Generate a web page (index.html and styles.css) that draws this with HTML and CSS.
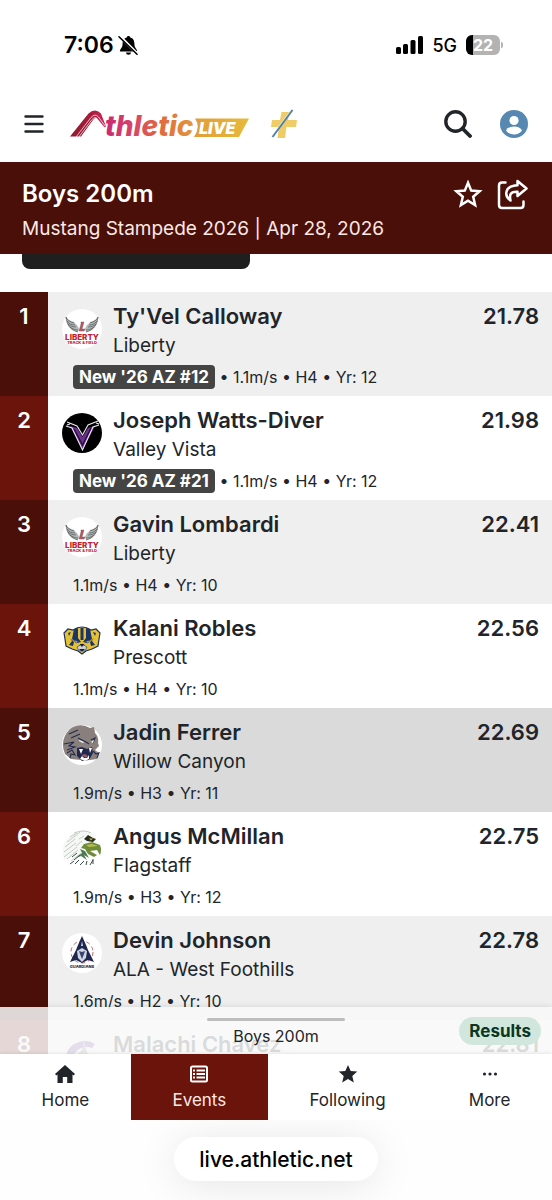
FILE: index.html
```html
<!DOCTYPE html>
<html lang="en">
<head>
<meta charset="utf-8">
<meta name="viewport" content="width=device-width, initial-scale=1">
<title>Boys 200m</title>
<link rel="stylesheet" href="styles.css">
</head>
<body>
<svg class="defs" aria-hidden="true">
  <symbol id="liberty" viewBox="0 0 40 40">
    <circle cx="20" cy="20" r="20" fill="#fff"/>
    <path d="M4 8c1 8 4 13 12 15l1-3c-1-4-4-5-5-7-3-1-6-2-8-5zM36 8c-1 8-4 13-12 15l-1-3c1-4 4-5 5-7 3-1 6-2 8-5z" fill="#b4b8b8"/>
    <path d="M4 8c1 3 4 5 8 6M5 12c2 3 5 4 8 4M6 15c2 2 5 3 8 3M8 18c3 2 5 3 8 3M36 8c-1 3-4 5-8 6M35 12c-2 3-5 4-8 4M34 15c-2 2-5 3-8 3M32 18c-3 2-5 3-8 3M4 8c1 8 4 13 12 15M36 8c-1 8-4 13-12 15" fill="none" stroke="#4c5252" stroke-width=".7"/>
    <path d="M19 13h3l-2 7h3l-1 2h-5l2-7z" fill="#c8505a" stroke="#555" stroke-width=".4"/>
    <text x="20" y="31" text-anchor="middle" class="crest-text" font-size="8" fill="#c3202b">LIBERTY</text>
    <text x="20" y="35" text-anchor="middle" class="crest-text" font-size="4" fill="#c3202b">TRACK &amp; FIELD</text>
  </symbol>
</svg>

<div class="status">
  <div class="status-side">
    <span class="clock">7:06</span>
    <svg width="21" height="21" viewBox="0 0 21 21" aria-hidden="true">
      <path d="M10.500 1a1.800 1.800 0 0 0-1.800 1.400C5.500 3.200 4.600 6 4.600 8.500c0 4-1.600 4.700-2.600 6.700-.3.800 0 1.300.8 1.300h15.400c.8 0 1.100-.5.800-1.300-1-2-2.600-2.700-2.600-6.700 0-2.500-.9-5.300-4.100-6.100A1.800 1.800 0 0 0 10.500 1zM8 17.500a2.500 2.300 0 0 0 5 0z"/>
      <path d="M1.500 1l18 18" stroke="#fff" stroke-width="3"/>
      <path d="M1 1.800l18 17.500" stroke="#000" stroke-width="1.600" stroke-linecap="round"/>
    </svg>
  </div>
  <div class="status-side status-right">
    <svg width="27" height="18" viewBox="0 0 27 18" aria-hidden="true">
      <rect x="0" y="11" width="5" height="7" rx="1.500"/><rect x="7" y="8" width="5" height="10" rx="1.500"/><rect x="14.500" y="4" width="5" height="14" rx="1.500"/><rect x="22" y="0" width="5" height="18" rx="1.500"/>
    </svg>
    <span class="network">5G</span>
    <span class="battery"><span class="battery-level">22</span></span>
  </div>
</div>

<header class="topbar">
  <button class="icon-button" aria-label="Menu">
    <svg width="20" height="20" viewBox="0 0 20 20"><path d="M1.500 2.500h17M1.500 10h17M1.500 17.500h17" stroke="#212529" stroke-width="2.400" stroke-linecap="round"/></svg>
  </button>
  <a class="brand" href="#" aria-label="Athletic Live">
    <svg width="180" height="30" viewBox="0 0 180 30">
      <defs>
        <linearGradient id="word" gradientUnits="userSpaceOnUse" x1="36" y1="0" x2="125" y2="0"><stop offset="0" stop-color="#c92a70"/><stop offset=".3" stop-color="#d8436a"/><stop offset=".6" stop-color="#e0683f"/><stop offset="1" stop-color="#e39a39"/></linearGradient>
        <linearGradient id="mark" x1="0" y1="0" x2="1" y2="0"><stop offset="0" stop-color="#8c1a2f"/><stop offset=".6" stop-color="#a91c3b"/><stop offset="1" stop-color="#cb2b62"/></linearGradient>
        <linearGradient id="flag" x1="0" y1="0" x2="1" y2="0"><stop offset="0" stop-color="#e19c38"/><stop offset="1" stop-color="#e6bb3b"/></linearGradient>
      </defs>
      <path d="M0 27.500 18.500 4.500Q25-1.500 31 4.500L36 17.500l-1.500.8L28 10.500q-2.500-3-5 .5L11 27.500z" fill="url(#mark)"/>
      <path d="M6 28 21 8.500q4-4.500 7.500-.5l6.500 9M8.800 28 22 10.500q3-3.500 5.500-.5" fill="none" stroke="#fff" stroke-width=".7"/>
      <text x="35" y="27" class="logo-word" fill="url(#word)">thletic</text>
      <path d="M125 9.500h54L169 28h-45q7-10 1-18.500z" fill="url(#flag)"/>
      <text x="129" y="24.500" class="logo-live" fill="#fff">LIVE</text>
    </svg>
  </a>
  <a class="plus" href="#" aria-label="Plus">
    <svg width="28" height="30" viewBox="0 0 28 30"><path d="M11.500 3h8L18 11h9l-1 7h-9.500L15 29H7.500l1.500-11H1l1-7h8z" fill="#f0cc66"/><path d="M21.500 1.500 2 28" stroke="#fff" stroke-width="2"/><path d="M22.500 1 2.500 28" stroke="#4f80ab" stroke-width="2"/></svg>
  </a>
  <div class="topbar-tools">
    <button class="icon-button" aria-label="Search">
      <svg width="28" height="28" viewBox="0 0 28 28" fill="none" stroke="#212529"><circle cx="11.500" cy="11.500" r="9.700" stroke-width="3.400"/><path d="m18.500 18.500 7.500 7.500" stroke-width="3.800" stroke-linecap="round"/></svg>
    </button>
    <button class="icon-button" aria-label="Account">
      <svg width="28" height="28" viewBox="0 0 28 28"><circle cx="14" cy="14" r="14" fill="#5688b1"/><circle cx="14" cy="10.500" r="4.600" fill="#fff"/><path d="M6 20.500q2-4 8-4t8 4q-3 4-8 4t-8-4z" fill="#fff"/></svg>
    </button>
  </div>
</header>

<section class="event">
  <div class="event-title">
    <h1>Boys 200m</h1>
    <div class="event-tools">
      <button class="icon-button" aria-label="Follow event">
        <svg width="30" height="30" viewBox="0 0 30 30"><path d="m15 3.800 3.200 7.800 8.400.7-6.400 5.500 1.900 8.200-7.100-4.400L7.900 26l1.900-8.200-6.400-5.500 8.400-.7z" fill="none" stroke="#fff" stroke-width="2.500"/></svg>
      </button>
      <button class="icon-button" aria-label="Share">
        <svg width="31" height="31" viewBox="0 0 31 31" fill="none" stroke="#fff" stroke-width="2.500" stroke-linejoin="round" stroke-linecap="round"><path d="M8.500 3.500H5q-3 0-3 3V26q0 3 3 3h18.500q3 0 3-3v-3.500"/><path d="M20.500 2 29.500 9.500l-9 7.500v-4.200c-6.500-.3-8.500 2.200-7 8.700-7-5-5.500-14.800 7-15.300z"/></svg>
      </button>
    </div>
  </div>
  <p>Mustang Stampede 2026 | Apr 28, 2026</p>
</section>

<main class="content">
  <div class="filter"></div>
  <ol class="results">
    <li class="result">
      <span class="rank">1</span>
      <svg class="crest"><use href="#liberty"/></svg>
      <div class="who"><h2>Ty'Vel Calloway</h2><p>Liberty</p></div>
      <strong class="mark">21.78</strong>
      <p class="meta"><span class="badge">New '26 AZ #12</span> • 1.1m/s • H4 • Yr: 12</p>
    </li>
    <li class="result">
      <span class="rank">2</span>
      <svg class="crest" viewBox="0 0 40 40"><circle cx="20" cy="20" r="20"/><path d="m8 13 7 2 5.500 9L26 15l7-2-12.500 24z" fill="#6d2f8e"/><path d="m5 9 10 4 5.500 9L26 12l10-4M4 13l6 2 10.500 22L31 14l6-2M8 11l-3 1M34 10l3 1" fill="none" stroke="#ece8f0" stroke-width="1.100"/><path d="m12 16 8.500 16L29 15" fill="none" stroke="#250d33" stroke-width="1.200"/></svg>
      <div class="who"><h2>Joseph Watts-Diver</h2><p>Valley Vista</p></div>
      <strong class="mark">21.98</strong>
      <p class="meta"><span class="badge">New '26 AZ #21</span> • 1.1m/s • H4 • Yr: 12</p>
    </li>
    <li class="result">
      <span class="rank">3</span>
      <svg class="crest"><use href="#liberty"/></svg>
      <div class="who"><h2>Gavin Lombardi</h2><p>Liberty</p></div>
      <strong class="mark">22.41</strong>
      <p class="meta">1.1m/s • H4 • Yr: 10</p>
    </li>
    <li class="result">
      <span class="rank">4</span>
      <svg class="crest" viewBox="0 0 40 40"><path d="m2 12 4-4 5 1q9-6 18 0l5-1 4 4-1 6-1 7-6 3-6 2-4 3-4-3-6-2-6-3-1-7z" fill="#e5c235" stroke="#1d315e" stroke-width="1.200"/><path d="m12 8 4-1v10l3 4-4 1-5-4zM18.500 7h3v12h-3zM24 7l4 1 2 10-5 4-4-1 3-4zM6 12l3-1-2 4zM34 12l-3-1 2 4zM8 17l2 3-3 4 4 1 1-4zM32 17l-2 3 3 4-4 1-1-4z" fill="#1c3566"/><path d="m12 19 5 2-3 1zM28 19l-5 2 3 1zM15 26l5-3 5 3-2 4h-6z" fill="#cdd2d4" stroke="#33415e" stroke-width=".7"/><path d="M17.500 23h5L20 26zM17 28h6l-2 2h-2z" fill="#182036"/></svg>
      <div class="who"><h2>Kalani Robles</h2><p>Prescott</p></div>
      <strong class="mark">22.56</strong>
      <p class="meta">1.1m/s • H4 • Yr: 10</p>
    </li>
    <li class="result current">
      <span class="rank">5</span>
      <svg class="crest" viewBox="0 0 40 40"><circle cx="20" cy="20" r="20" fill="#fff"/><path d="M8 4q10-7 20-1l4-1 1 6q4 4 3 10l1 3-4 4 4 3-2 6-7 1-4-4-5 4-10-1-6-5Q-3 15 8 4z" fill="#89807d"/><path d="m7 9 9-4M9 13l9-4M16 13l8 4 3 2M29 15l4-2-2 5M2 19l10-2-5 4 6 1-8 3M5 28l5-3 3 5-4-1-1 4M31 26l3 3 3-1-2 5" fill="none" stroke="#242c4c" stroke-width="1.100"/><path d="m15 23 5-1 5 2 5-2 1 6-4 7-7 1-5-5z" fill="#20294d"/><path d="m17 24 2 5 2-5zM27 23l1 5 2-5zM18 34l2-3 2 2h3l2-3v4l-4 2z" fill="#fff"/><path d="m19 30 4-1 3 2-2 2z" fill="#8d5b66"/><path d="m17 15 5 2-1 1-4-2zM29 17l3-2-1 3z" fill="#fff"/></svg>
      <div class="who"><h2>Jadin Ferrer</h2><p>Willow Canyon</p></div>
      <strong class="mark">22.69</strong>
      <p class="meta">1.9m/s • H3 • Yr: 11</p>
    </li>
    <li class="result">
      <span class="rank">6</span>
      <svg class="crest" viewBox="0 0 40 40"><path d="M12 4Q26-2 33 7l2 7-8 3-9 7L2 31Q-3 12 12 4z" fill="#f6f8f5"/><path d="M12 4q10-4 17 0M8 8l7-4M5 13l8-6M3 18l10-8M2 23l12-9M2 28l13-10M5 30l11-9M18 3l-6 5M22 7l-5 3M20 12l-6 5M9 32l10-8" fill="none" stroke="#b5c0b9" stroke-width=".8"/><path d="m22 15 8-2 8 3q2 5 0 10l-3-5-7 1 7 4-3 2-6-3-3-5-4-1z" fill="#6f8c3b"/><path d="m24 16 6-1 6 2-9 1z" fill="#b5bd4e"/><path d="m22 10 4-4 5 3 3 1-3 3-6-1z" fill="#252c22"/><path d="M27 9.500h4l-2 2z" fill="#d6b234"/><path d="m18 20 5 2 4 7-5-3 3 5-6-4-5 2 6-5z" fill="#4c7a52"/><path d="m8 35 4-3M13 35l4-4M18 36l4-4M24 36l1-4M28 36l3-5M31 35v-5M10 28l5-4M12 31l6-5" fill="none" stroke="#344f40"/></svg>
      <div class="who"><h2>Angus McMillan</h2><p>Flagstaff</p></div>
      <strong class="mark">22.75</strong>
      <p class="meta">1.9m/s • H3 • Yr: 12</p>
    </li>
    <li class="result">
      <span class="rank">7</span>
      <svg class="crest" viewBox="0 0 40 40"><circle cx="20" cy="20" r="20" fill="#fff"/><circle cx="20" cy="19" r="11" fill="none" stroke="#c76767" stroke-dasharray="4 3"/><path d="m20 3 4 9 2 5 6 12-6-2-6 3-6-3-6 2 6-12 2-5z" fill="#1e2750"/><path d="m20 8 1 5h-2zM15 18l5-3 5 3-1 7-4 4-4-4z" fill="#ced4e2"/><path d="m17 18 3 1 3-1-1 3-2 5-2-5z" fill="#39446c"/><text x="20" y="35" text-anchor="middle" class="crest-text" font-size="4" fill="#1d2645">GUARDIANS</text></svg>
      <div class="who"><h2>Devin Johnson</h2><p>ALA - West Foothills</p></div>
      <strong class="mark">22.78</strong>
      <p class="meta">1.6m/s • H2 • Yr: 10</p>
    </li>
    <li class="result">
      <span class="rank">8</span>
      <svg class="crest" viewBox="0 0 40 40"><path d="M3 27Q3 5 24 4q5 0 9 3l-3 4Q15 6 9 25z" fill="#6b3a9c"/><path d="m22 2 3 14 10 4-12 4-4-7-12 6 13-10z" fill="#8e8b96"/></svg>
      <div class="who"><h2>Malachi Chavez</h2></div>
      <strong class="mark">22.81</strong>
    </li>
  </ol>
  <div class="sheet">
    <span class="handle"></span>
    <span class="sheet-label">Boys 200m</span>
    <span class="sheet-state">Results</span>
  </div>
</main>

<nav class="tabs">
  <a href="#"><svg width="20" height="20" viewBox="0 0 20 20"><path d="M10 1 20 10l-1.300 1.400-1.200-1V19h-5.300v-6H7.800v6H2.500v-8.600l-1.200 1L0 10z" fill="#212529"/></svg>Home</a>
  <a class="active" href="#" aria-current="page"><svg width="20" height="20" viewBox="0 0 20 20" fill="none" stroke="#fff" stroke-width="2"><rect x="2" y="2.500" width="16" height="15" rx="1.500"/><path d="M7.500 6.500H16M7.500 10H16M7.500 13.500H16M4 6.500h2M4 10h2M4 13.500h2"/></svg>Events</a>
  <a href="#"><svg width="20" height="20" viewBox="0 0 20 20"><path d="m10 1 2.700 6 6.500.6-4.900 4.300 1.500 6.600-5.800-3.400-5.800 3.400 1.500-6.600L.8 7.600 7.300 7z" fill="#212529"/></svg>Following</a>
  <a href="#"><svg width="20" height="20" viewBox="0 0 20 20" fill="#212529"><circle cx="4.500" cy="10" r="1.600"/><circle cx="10" cy="10" r="1.600"/><circle cx="15.500" cy="10" r="1.600"/></svg>More</a>
</nav>
<footer class="browser"><button class="address">live.athletic.net</button></footer>
</body>
</html>
```
FILE: styles.css
```css
* { box-sizing: border-box; }
body {
  margin: 0;
  height: 100vh;
  display: flex;
  flex-direction: column;
  background: #fff;
  color: #212529;
  font-family: Inter, "Liberation Sans", sans-serif;
}
h1, h2, p, ol { margin: 0; padding: 0; }
a { color: inherit; text-decoration: none; }
svg { display: block; }
button { font: inherit; color: inherit; border: 0; padding: 0; background: none; }
.defs { position: absolute; width: 0; height: 0; }
.crest-text { font-family: Inter, sans-serif; font-weight: 800; }

.status {
  display: flex;
  justify-content: space-between;
  padding: 30px 52px 26px 64px;
  color: #000;
}
.status-side { display: flex; align-items: center; gap: 4px; height: 30px; }
.status-right { gap: 9px; }
.clock { font-size: 23px; font-weight: 600; }
.network { font-size: 18px; font-weight: 500; }
.battery {
  position: relative;
  width: 34px;
  height: 20px;
  border-radius: 6px;
  background: linear-gradient(90deg, #000 22%, #b3b3b3 22%);
  color: #fff;
  font-size: 16px;
  font-weight: 700;
  line-height: 20px;
  text-align: center;
}
.battery::after {
  content: "";
  position: absolute;
  left: 35px;
  top: 7px;
  width: 2px;
  height: 6px;
  border-radius: 0 2px 2px 0;
  background: #b3b3b3;
}

.topbar { display: flex; align-items: center; height: 76px; padding: 0 24px; }
.brand { margin-left: 26px; }
.plus { margin-left: 20px; }
.topbar-tools { display: flex; gap: 28px; margin-left: auto; }
.logo-word { font-size: 28px; font-weight: 800; font-style: italic; }
.logo-live { font-size: 16px; font-weight: 900; font-style: italic; }

.event { padding: 16px 24px 10px 22px; background: #490f08; color: #fff; }
.event-title { display: flex; align-items: center; justify-content: space-between; height: 32px; }
.event-tools { display: flex; align-items: center; gap: 14px; }
.event h1 { font-size: 24px; line-height: 32px; font-weight: 600; }
.event p { margin-top: 4px; font-size: 19px; line-height: 30px; color: #fbe9e4; }

.content { position: relative; flex: 1; min-height: 0; overflow: hidden; }
.filter { width: 228px; height: 15px; margin: 0 0 23px 22px; border-radius: 0 0 8px 8px; background: #1f1f1f; }
.results { list-style: none; }
.result {
  display: grid;
  grid-template-columns: 48px 65px 1fr auto;
  grid-template-rows: 69px 35px;
  padding-right: 13px;
}
.result:nth-child(odd) { background: #efefef; }
.result.current { background: #dadada; }
.rank {
  grid-row: 1 / 3;
  padding-top: 9px;
  background: #6a140b;
  color: #fff;
  font-size: 22px;
  line-height: 30px;
  font-weight: 600;
  text-align: center;
}
.result:nth-child(odd) .rank { background: #490f08; }
.crest { width: 40px; height: 40px; margin: 17px 0 0 14px; }
.who { padding-top: 9px; }
.who h2 { font-size: 22px; line-height: 30px; font-weight: 600; }
.who p { font-size: 19px; line-height: 30px; }
.mark { padding-top: 9px; font-size: 22px; line-height: 30px; font-weight: 600; }
.meta { grid-column: 2 / 5; padding-left: 25px; font-size: 16px; line-height: 32px; }
.badge {
  display: inline-block;
  padding: 0 6px;
  border-radius: 4px;
  background: #444;
  color: #fff;
  font-size: 17px;
  font-weight: 700;
  line-height: 24px;
}

.sheet {
  position: absolute;
  inset: auto 0 0;
  height: 47px;
  display: grid;
  grid-template-columns: 1fr auto 1fr;
  align-items: center;
  padding: 0 11px;
  background: rgba(248, 248, 248, .86);
  box-shadow: 0 0 6px rgba(0, 0, 0, .12);
}
.handle { position: absolute; left: 50%; top: 11px; width: 138px; height: 3px; margin-left: -69px; border-radius: 2px; background: #bdbdbd; }
.sheet-label { grid-column: 2; padding-top: 10px; font-size: 16px; line-height: 20px; }
.sheet-state { justify-self: end; padding: 0 10px; border-radius: 14px; background: #d1e7dd; color: #0a3622; font-size: 17px; line-height: 28px; font-weight: 700; }

.tabs { display: flex; height: 66px; box-shadow: 0 0 4px rgba(0, 0, 0, .12); z-index: 1; }
.tabs a { flex: 1 1 auto; display: flex; flex-direction: column; align-items: center; gap: 4px; padding-top: 10px; font-size: 17px; line-height: 24px; }
.tabs .active { background: #6a140b; color: #fde9e4; }
.browser { display: flex; justify-content: center; height: 80px; padding-top: 17px; overflow: hidden; background: #fefefe; z-index: 1; }
.address { height: 44px; padding: 0 25px; border-radius: 22px; background: #fff; color: #000; font-size: 21px; font-weight: 500; box-shadow: 0 4px 40px rgba(0, 0, 0, .1); }
```
